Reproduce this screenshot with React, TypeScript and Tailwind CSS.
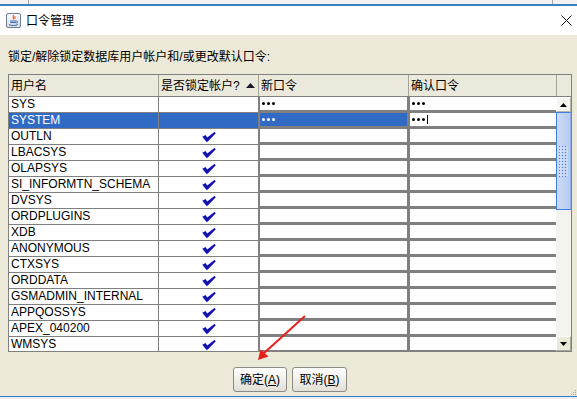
import React from "react";

type Row = { name: string; locked: boolean; pw?: boolean; selected?: boolean };

const rows: Row[] = [
  { name: "SYS", locked: false, pw: true },
  { name: "SYSTEM", locked: false, pw: true, selected: true },
  { name: "OUTLN", locked: true },
  { name: "LBACSYS", locked: true },
  { name: "OLAPSYS", locked: true },
  { name: "SI_INFORMTN_SCHEMA", locked: true },
  { name: "DVSYS", locked: true },
  { name: "ORDPLUGINS", locked: true },
  { name: "XDB", locked: true },
  { name: "ANONYMOUS", locked: true },
  { name: "CTXSYS", locked: true },
  { name: "ORDDATA", locked: true },
  { name: "GSMADMIN_INTERNAL", locked: true },
  { name: "APPQOSSYS", locked: true },
  { name: "APEX_040200", locked: true },
  { name: "WMSYS", locked: true },
];

function Dots({ light }: { light?: boolean }) {
  const dot = light ? "w-[3px] h-[3px] rounded-full bg-white" : "w-[3px] h-[3px] rounded-full bg-black";
  return (
    <div className="flex gap-[2px] pl-[2px]">
      <span className={dot} />
      <span className={dot} />
      <span className={dot} />
    </div>
  );
}

function Check() {
  return (
    <svg width="14" height="10" viewBox="0 0 14 10">
      <path d="M0.3 4.8 L3.6 3 L5.2 5.4 L12.4 0 L13.8 1.2 L5.6 9.8 L4.4 9.8 Z" fill="#1010B4" />
    </svg>
  );
}

function JavaIcon() {
  return (
    <svg width="15" height="15" viewBox="0 0 15 15">
      <defs>
        <linearGradient id="jg" x1="0" y1="0" x2="0" y2="1">
          <stop offset="0" stopColor="#FFFFFF" />
          <stop offset="1" stopColor="#D5DDE8" />
        </linearGradient>
      </defs>
      <rect x="0.5" y="0.5" width="14" height="14" rx="1.5" fill="url(#jg)" stroke="#6F7E8E" />
      <path d="M7.6 2 C5.8 3.6 8.8 4.4 7 6.4 M9.2 3.2 C8.2 4.2 9.6 4.8 8.6 6" stroke="#E2561C" strokeWidth="1.1" fill="none" />
      <path d="M4 8 H10.5 M4.2 9.6 H10.2 M3 11.6 C5 12.8 9.8 12.8 11.8 11.4 M10.5 8.2 C12.2 8.2 12.2 10 10.2 10.2" stroke="#3C64A8" strokeWidth="1" fill="none" />
    </svg>
  );
}

export default function App() {
  return (
    <div className="w-[577px] h-[399px] relative overflow-hidden bg-[#ECE9D8] text-[12px] text-black font-['Liberation_Sans','Noto_Sans_CJK_SC',sans-serif] flex flex-col">
      {/* window behind */}
      <div className="h-[4px] bg-[#F1F1F1] flex">
        <div className="w-[28px]" />
        <div className="w-px bg-[#A8A8A8]" />
        <div className="flex-1" />
        <div className="w-px bg-[#A8A8A8]" />
        <div className="w-[24px]" />
      </div>
      <div className="h-[2px] bg-[#3A7FC1]" />

      {/* title bar */}
      <div className="h-[29px] bg-white flex items-center justify-between pl-[6px] pr-[5px]">
        <div className="flex items-center gap-[5px]">
          <JavaIcon />
          <span className="text-[12px] leading-none">口令管理</span>
        </div>
        <svg width="11" height="11" viewBox="0 0 11 11">
          <path d="M0.5 0.5 L10.5 10.5 M10.5 0.5 L0.5 10.5" stroke="#111" strokeWidth="1" />
        </svg>
      </div>

      {/* description */}
      <div className="mt-[14px] h-[16px] leading-[16px] pl-[8px]">锁定/解除锁定数据库用户帐户和/或更改默认口令:</div>

      {/* table */}
      <div className="mt-[9px] ml-[8px] w-[564px] border border-[#808080]">
        <div className="flex h-[22px] border-b border-[#808080] bg-[#EBE9DB]">
          <div className="w-[150px] border-r border-[#A5A396] pl-[2px] flex items-center">用户名</div>
          <div className="w-[100px] border-r border-[#A5A396] pl-[2px] pr-[3px] flex items-center justify-between">
            <span>是否锁定帐户?</span>
            <svg width="9" height="5" viewBox="0 0 9 5">
              <path d="M0 5 L4.5 0 L9 5 Z" fill="#1A1A2A" />
            </svg>
          </div>
          <div className="w-[150px] border-r border-[#A5A396] pl-[2px] flex items-center">新口令</div>
          <div className="w-[148px] border-r border-[#A5A396] pl-[2px] flex items-center">确认口令</div>
          <div className="flex-1" />
        </div>

        <div className="flex h-[254px] overflow-hidden">
          <div className="w-[547px] flex flex-col">
            {rows.map((r) => (
              <div key={r.name} className="flex h-[16px] shrink-0">
                <div
                  className={
                    r.selected
                      ? "w-[150px] border-r border-b border-[#808080] bg-[#316AC5] text-white pl-[2px] leading-[15px]"
                      : "w-[150px] border-r border-b border-[#808080] bg-white pl-[2px] leading-[15px]"
                  }
                >
                  {r.name}
                </div>
                <div
                  className={
                    r.selected
                      ? "w-[100px] border-r border-b border-[#808080] bg-[#316AC5] flex items-center justify-center"
                      : "w-[100px] border-r border-b border-[#808080] bg-white flex items-center justify-center"
                  }
                >
                  {r.locked && <Check />}
                </div>
                <div className="w-[150px] bg-[#808080] pl-px pr-[2px] pb-[3px]">
                  <div className={r.selected ? "h-full bg-[#316AC5] flex items-center" : "h-full bg-white flex items-center"}>
                    {r.pw && <Dots light={r.selected} />}
                  </div>
                </div>
                <div className="w-[147px] bg-[#808080] pl-px pb-[3px]">
                  <div className="h-full bg-white flex items-center">
                    {r.pw && <Dots />}
                    {r.selected && <span className="ml-[2px] w-px h-[9px] bg-black" />}
                  </div>
                </div>
              </div>
            ))}
          </div>

          {/* scrollbar */}
          <div className="w-[15px] flex flex-col bg-[#F4F3EE]">
            <div className="h-[15px] bg-[#F6F5EF] border border-t-white border-l-white border-r-[#B8B6A8] border-b-[#B8B6A8] flex items-center justify-center">
              <svg width="7" height="4" viewBox="0 0 7 4">
                <path d="M0 4 L3.5 0 L7 4 Z" fill="#000" />
              </svg>
            </div>
            <div className="h-[98px] border border-[#3C7FE0] border-r-[#8FB0EC] bg-gradient-to-r from-[#CCDBF7] to-[#B6CBF1] flex items-center justify-center">
              <svg width="9" height="31" viewBox="0 0 9 31">
                <defs>
                  <pattern id="grip" width="3" height="3" patternUnits="userSpaceOnUse">
                    <rect x="0" y="0" width="1" height="1" fill="#4C7FE6" />
                    <rect x="1.5" y="1.5" width="1" height="1" fill="#FFFFFF" />
                  </pattern>
                </defs>
                <rect width="9" height="31" fill="url(#grip)" />
              </svg>
            </div>
            <div className="flex-1" />
            <div className="h-[15px] bg-[#ECE9D8] border border-t-white border-l-white border-r-[#A9A798] border-b-[#A9A798] flex items-center justify-center">
              <svg width="7" height="4" viewBox="0 0 7 4">
                <path d="M0 0 L7 0 L3.5 4 Z" fill="#000" />
              </svg>
            </div>
          </div>
        </div>
      </div>

      {/* buttons */}
      <div className="mt-[15px] flex justify-center gap-[5px] pl-[3px]">
        <button className="w-[54px] h-[25px] rounded-[3px] border border-[#8A8A86] bg-gradient-to-b from-white to-[#E2E0D6] text-[12px] flex items-center justify-center">
          确定(<span className="underline">A</span>)
        </button>
        <button className="w-[55px] h-[25px] rounded-[3px] border border-[#8A8A86] bg-gradient-to-b from-white to-[#E2E0D6] text-[12px] flex items-center justify-center">
          取消(<span className="underline">B</span>)
        </button>
      </div>

      {/* window behind, bottom */}
      <div className="mt-[4px] h-px bg-[#3A7FC1]" />
      <div className="flex-1 bg-[#E8EEF5]" />

      {/* resize grip */}
      <svg className="absolute right-0 bottom-[3px]" width="8" height="8" viewBox="0 0 8 8">
        <rect x="6" y="2" width="1" height="1" fill="#A6A497" />
        <rect x="4" y="4" width="1" height="1" fill="#A6A497" />
        <rect x="6" y="4" width="1" height="1" fill="#A6A497" />
        <rect x="2" y="6" width="1" height="1" fill="#A6A497" />
        <rect x="4" y="6" width="1" height="1" fill="#A6A497" />
        <rect x="6" y="6" width="1" height="1" fill="#A6A497" />
      </svg>

      {/* red annotation arrow */}
      <svg className="absolute left-0 top-0 pointer-events-none" width="577" height="399" viewBox="0 0 577 399">
        <path d="M305 316 L263 354" stroke="#E8201A" strokeWidth="2" fill="none" />
        <path d="M258 360 L260.5 349.5 L268.5 356.5 Z" fill="#E8201A" />
      </svg>
    </div>
  );
}
